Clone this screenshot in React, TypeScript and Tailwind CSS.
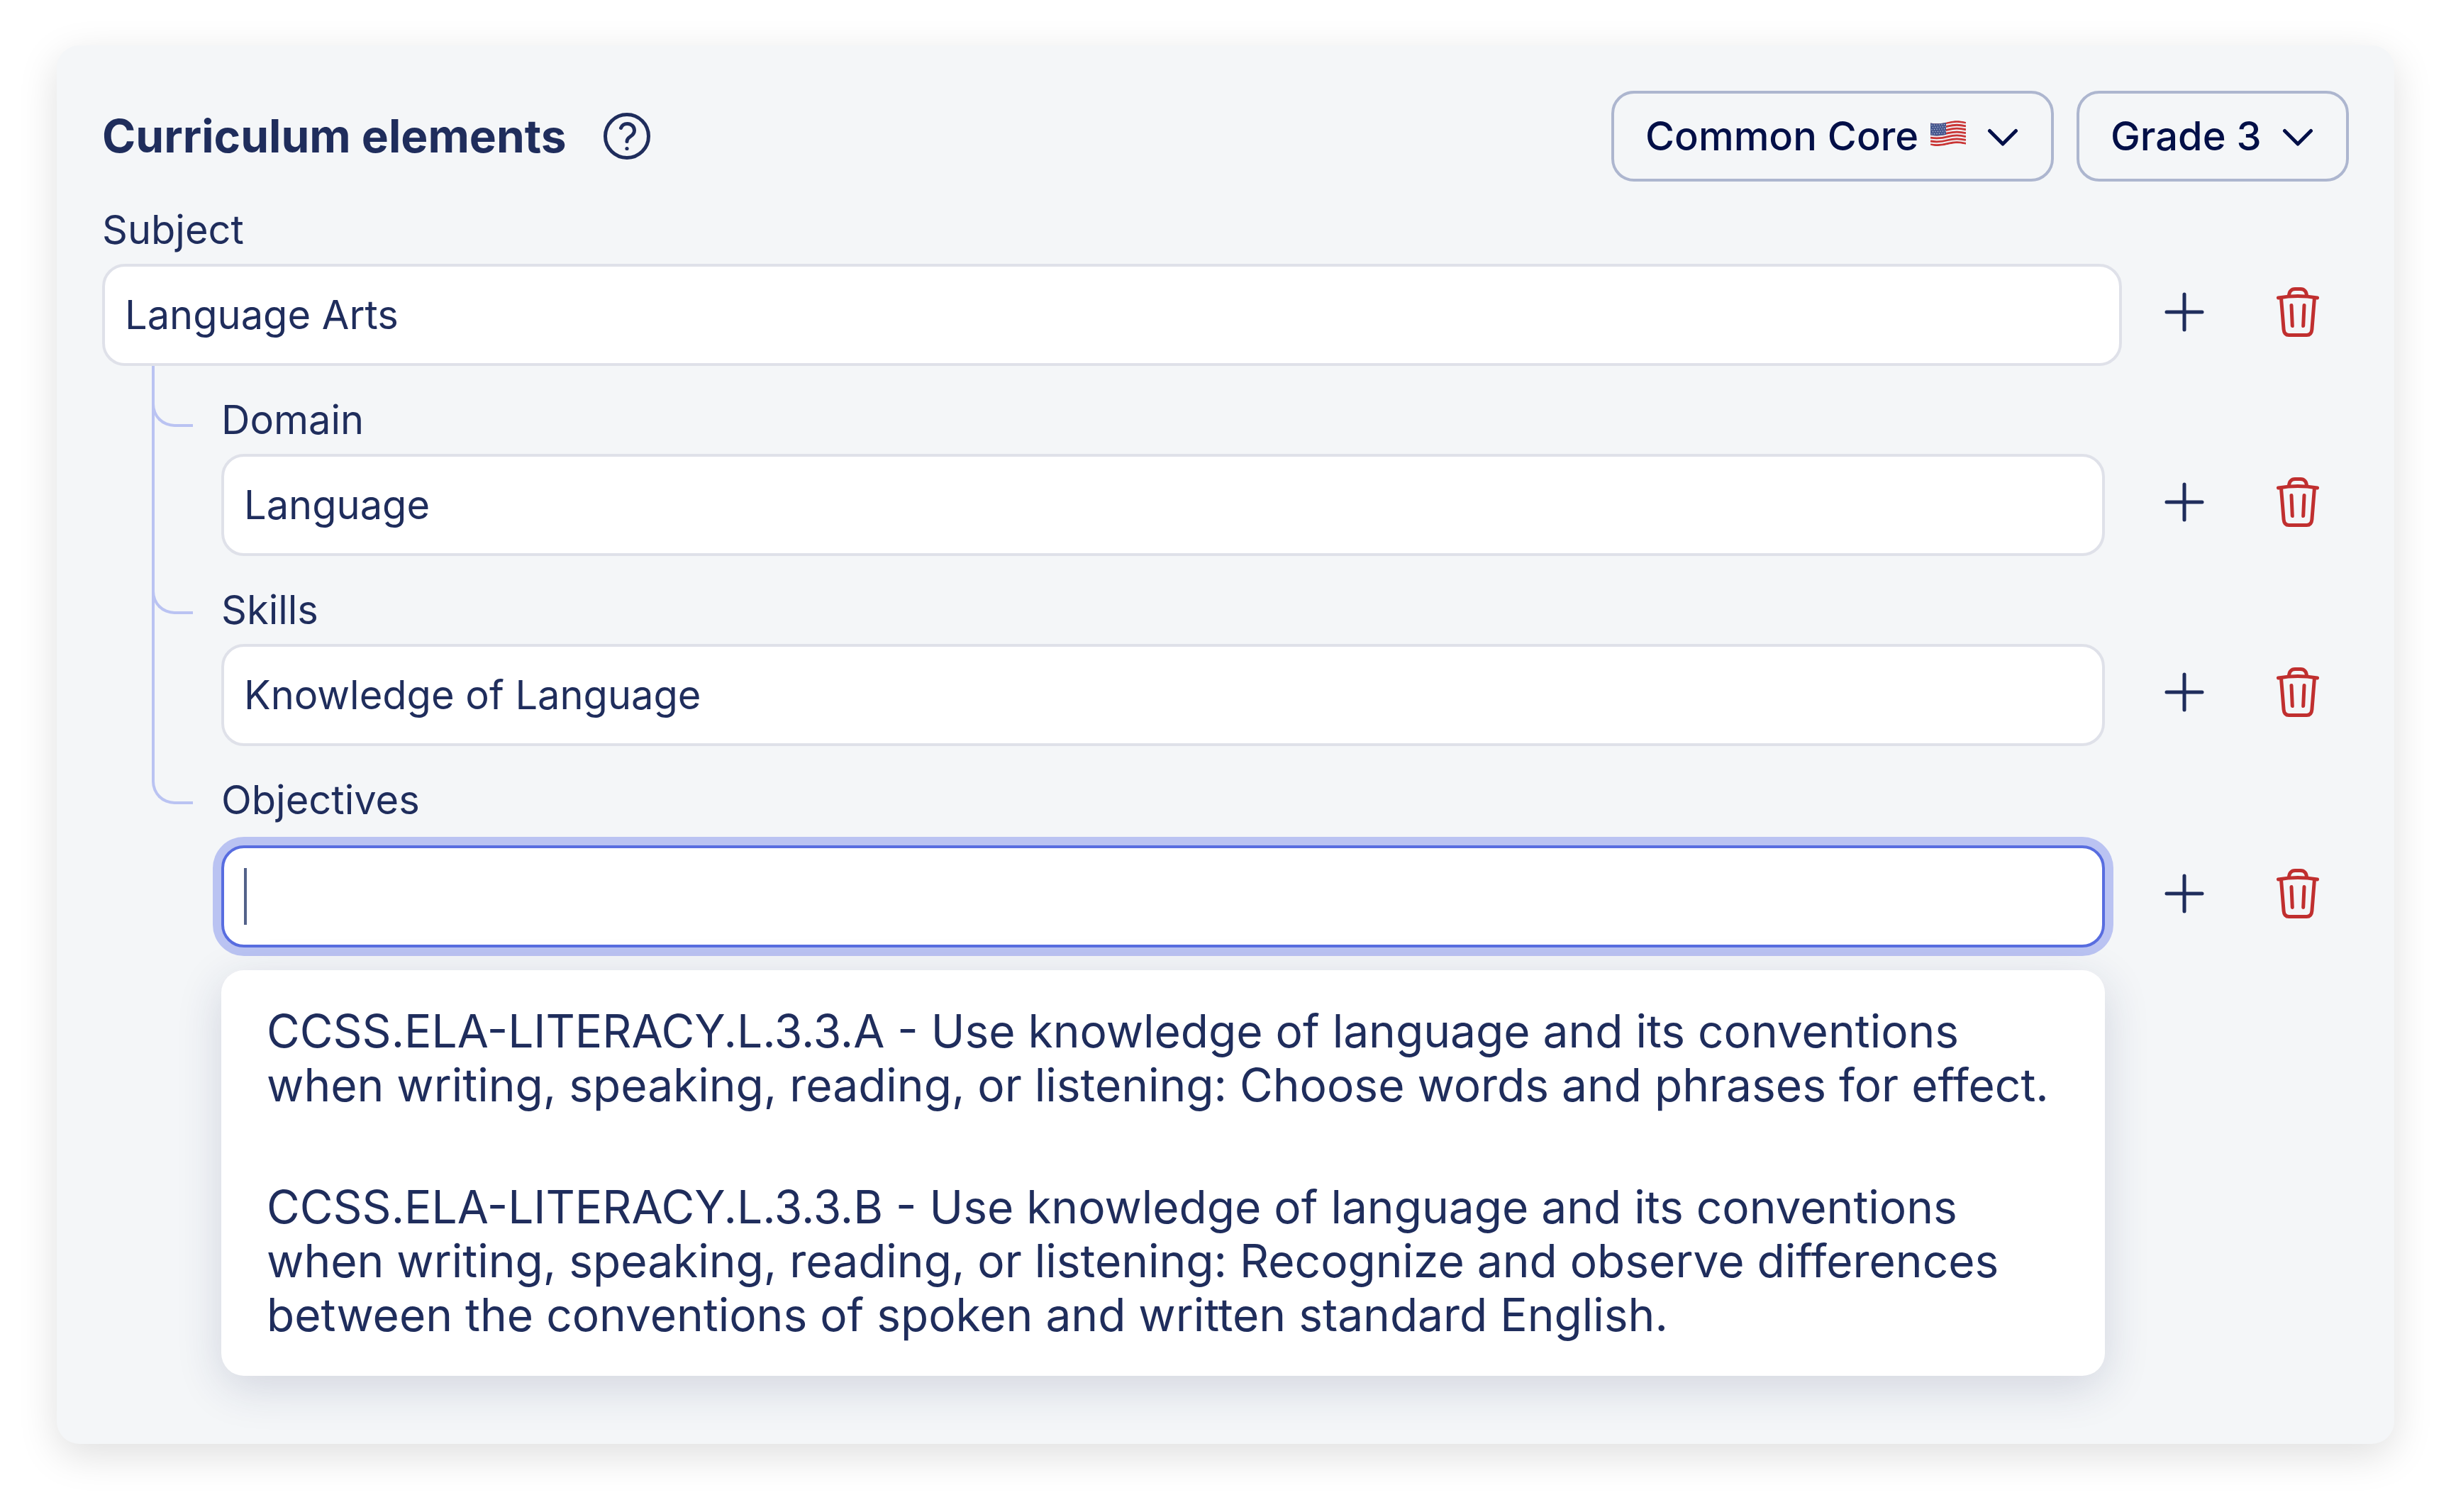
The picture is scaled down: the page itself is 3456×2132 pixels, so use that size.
import { useState } from 'react';

const standards = [
  {
    code: 'CCSS.ELA-LITERACY.L.3.3.A',
    text: 'Use knowledge of language and its conventions when writing, speaking, reading, or listening: Choose words and phrases for effect.',
  },
  {
    code: 'CCSS.ELA-LITERACY.L.3.3.B',
    text: 'Use knowledge of language and its conventions when writing, speaking, reading, or listening: Recognize and observe differences between the conventions of spoken and written standard English.',
  },
];

function HelpIcon() {
  return (
    <svg viewBox="0 0 66 66" className="size-[66px]" fill="none" stroke="currentColor" strokeWidth="5" strokeLinecap="round" aria-hidden="true">
      <circle cx="33" cy="33" r="30.5" />
      <path d="M24.500 21.500C26 17.500 29.500 15.500 33.500 15.500C39 15.500 43.500 19.500 43.500 25C43.500 34 33 33 33 40.500" />
      <circle cx="33" cy="50.500" r="2.600" fill="currentColor" stroke="none" />
    </svg>
  );
}

function PlusIcon() {
  return (
    <svg viewBox="0 0 56 56" className="size-14" fill="none" stroke="currentColor" strokeWidth="5" strokeLinecap="round" aria-hidden="true">
      <path d="M28 3v50M3 28h50" />
    </svg>
  );
}

function TrashIcon() {
  return (
    <svg viewBox="0 0 72 72" className="size-[72px]" fill="none" stroke="currentColor" strokeWidth="5" strokeLinecap="round" strokeLinejoin="round" aria-hidden="true">
      <path d="M8.500 16Q36 11 63.500 16" />
      <path d="M23.500 13.500C23.500 7 27 3.500 32 3.500h8c5 0 8.500 3.500 8.500 10" />
      <path d="M12.500 16l3.600 44.500c.4 5 3 8 7.400 8h25c4.400 0 7-3 7.400-8L59.500 16" />
      <path d="M27 26.500l1.300 29M45 26.500l-1.300 29" />
    </svg>
  );
}

function ChevronIcon() {
  return (
    <svg viewBox="0 0 44 26" className="h-[26px] w-11" fill="none" stroke="currentColor" strokeWidth="5" strokeLinecap="round" strokeLinejoin="round" aria-hidden="true">
      <path d="M3.500 3.500L22 22 40.500 3.500" />
    </svg>
  );
}

function FlagIcon() {
  return (
    <svg viewBox="0 0 50 36" className="h-9 w-[50px]" aria-hidden="true">
      <defs>
        <clipPath id="flag-shape">
          <path d="M0 3.500C8 5 16 4.500 25 2S42 0 50 2v32c-8-2.500-16-2-25 0S8 37 0 34.500z" />
        </clipPath>
      </defs>
      <g clipPath="url(#flag-shape)">
        <rect width="50" height="36" fill="#f1eff2" />
        <g fill="none" stroke="#c93434" strokeWidth="2.800">
          {[0, 1, 2, 3, 4, 5, 6].map(i => (
            <path key={i} transform={`translate(0 ${i * 4.9})`} d="M0 4.500C8 6 16 5.500 25 3S42 1 50 3" />
          ))}
        </g>
        <path d="M0 0h22v20c-8 1.500-15 2-22 .5z" fill="#46588f" />
        <g fill="#c5cbe0">
          {[0, 1, 2, 3, 4].map(row =>
            [0, 1, 2, 3, 4, 5].map(col => (
              <circle key={`${row}-${col}`} cx={2 + col * 3.5 + (row % 2) * 1.5} cy={6.5 + row * 3.1 - col * 0.2} r="0.700" />
            ))
          )}
        </g>
      </g>
    </svg>
  );
}

function RowActions({ name }: { name: string }) {
  return (
    <div className="flex gap-4 text-[#1f2d5c]">
      <button type="button" aria-label={`Add ${name}`} className="flex h-[136px] w-36 items-center justify-center">
        <PlusIcon />
      </button>
      <button type="button" aria-label={`Delete ${name}`} className="flex h-[136px] w-36 items-center justify-center text-[#c02f2f]">
        <TrashIcon />
      </button>
    </div>
  );
}

function Label({ id, children }: { id: string; children: string }) {
  return (
    <label htmlFor={id} className="block text-[56px] leading-[72px]">
      {children}
    </label>
  );
}

const inputClass = 'block h-36 w-full rounded-[32px] border-4 bg-white px-7 text-[56px] outline-none';

// Elbow from the trunk line to a child label; the trunk runs on unless it is the last child
function Branch({ last, first }: { last?: boolean; first?: boolean }) {
  return (
    <div className="relative w-[168px] shrink-0 pl-[70px]" aria-hidden="true">
      {!last && <div className="absolute inset-y-0 w-1 bg-[#bac3f2]" />}
      <div className={`${first ? 'h-[86px]' : 'h-[82px]'} w-[58px] rounded-bl-[32px] border-b-4 border-l-4 border-[#bac3f2]`} />
    </div>
  );
}

function ChildField({ id, label, initial, first }: { id: string; label: string; initial: string; first?: boolean }) {
  const [value, setValue] = useState(initial);
  return (
    <div className="flex">
      <Branch first={first} />
      <div className="flex-1 pt-10">
        <Label id={id}>{label}</Label>
        <div className="mt-3 flex items-start gap-10">
          <input id={id} value={value} onChange={e => setValue(e.target.value)} className={`${inputClass} flex-1 border-[#dfe1e9]`} />
          <RowActions name={label} />
        </div>
      </div>
    </div>
  );
}

export default function App() {
  const [subject, setSubject] = useState('Language Arts');
  const [objective, setObjective] = useState('');

  return (
    <div className="min-h-screen bg-white px-20 py-16 font-['Inter',sans-serif] text-[#1f2d5c]">
      <section className="rounded-[32px] bg-[#f4f6f8] px-16 pt-16 pb-24 shadow-[0_16px_56px_rgba(0,0,0,0.13)]">
        <header className="flex items-center justify-between">
          <div className="flex items-center gap-[52px]">
            <h1 className="text-[64px] font-bold">Curriculum elements</h1>
            <button type="button" aria-label="Help">
              <HelpIcon />
            </button>
          </div>
          <div className="flex gap-8 font-medium text-[#020f47]">
            <div className="relative">
              <select aria-label="Standard" className="h-32 w-[624px] appearance-none rounded-[32px] border-4 border-[#adb6cf] bg-transparent px-11 text-[56px]">
                <option>Common Core</option>
              </select>
              <div className="pointer-events-none absolute inset-y-0 right-[50px] flex items-center gap-[30px]">
                <div className="pb-2">
                  <FlagIcon />
                </div>
                <div className="pt-1">
                  <ChevronIcon />
                </div>
              </div>
            </div>
            <div className="relative">
              <select aria-label="Grade" className="h-32 w-96 appearance-none rounded-[32px] border-4 border-[#adb6cf] bg-transparent px-11 text-[56px]">
                <option>Grade 3</option>
              </select>
              <div className="pointer-events-none absolute inset-y-0 right-[50px] flex items-center pt-1">
                <ChevronIcon />
              </div>
            </div>
          </div>
        </header>

        <div className="mt-8">
          <Label id="subject">Subject</Label>
          <div className="mt-3 flex items-start gap-4">
            <input id="subject" value={subject} onChange={e => setSubject(e.target.value)} className={`${inputClass} flex-1 border-[#dfe1e9]`} />
            <RowActions name="Subject" />
          </div>
        </div>

        <ChildField id="domain" label="Domain" initial="Language" first />
        <ChildField id="skills" label="Skills" initial="Knowledge of Language" />

        {/* Active field with its suggestions open */}
        <div className="flex">
          <Branch last />
          <div className="flex-1 pt-10">
            <Label id="objectives">Objectives</Label>
            <div className="mt-7 flex items-start gap-10">
              <div className="flex-1">
                <div className="relative">
                  <input
                    id="objectives"
                    value={objective}
                    onChange={e => setObjective(e.target.value)}
                    className={`${inputClass} border-[#586de0] caret-transparent ring-12 ring-[#bac3f2]`}
                  />
                  <span className="absolute top-8 left-8 h-20 w-1 bg-[#53628a]" />
                </div>
                <ul className="relative mt-8 rounded-[32px] bg-white shadow-[0_16px_64px_rgba(31,45,92,0.16)]">
                  {standards.map(s => (
                    <li key={s.code}>
                      <button type="button" className="block w-full px-16 py-12 text-left text-[64px] leading-[76px]">
                        {`${s.code} - ${s.text}`}
                      </button>
                    </li>
                  ))}
                </ul>
              </div>
              <RowActions name="Objectives" />
            </div>
          </div>
        </div>
      </section>
    </div>
  );
}
